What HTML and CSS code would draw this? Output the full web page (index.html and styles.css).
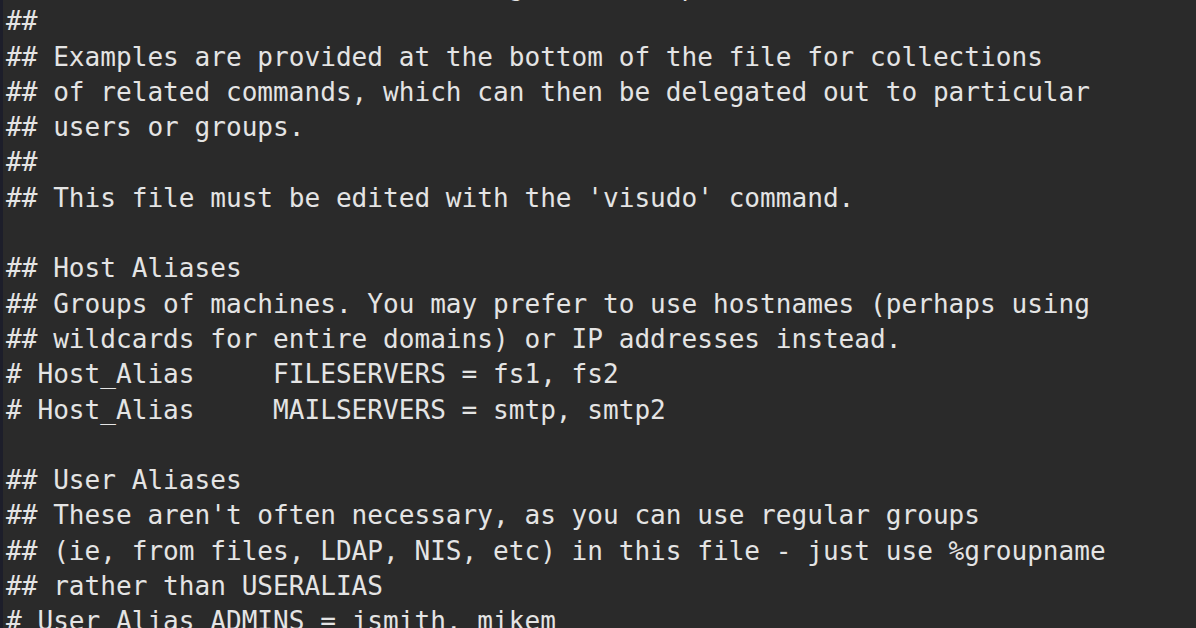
FILE: index.html
```html
<!DOCTYPE html>
<html>
<head>
<meta charset="utf-8">
<link rel="stylesheet" href="styles.css">
</head>
<body>
<main class="term">
<pre class="code">## the root user, without needing the root password.
##
## Examples are provided at the bottom of the file for collections
## of related commands, which can then be delegated out to particular
## users or groups.
##
## This file must be edited with the 'visudo' command.

## Host Aliases
## Groups of machines. You may prefer to use hostnames (perhaps using
## wildcards for entire domains) or IP addresses instead.
# Host_Alias     FILESERVERS = fs1, fs2
# Host_Alias     MAILSERVERS = smtp, smtp2

## User Aliases
## These aren't often necessary, as you can use regular groups
## (ie, from files, LDAP, NIS, etc) in this file - just use %groupname
## rather than USERALIAS
# User_Alias ADMINS = jsmith, mikem
</pre>
</main>
</body>
</html>
```

FILE: styles.css
```css
html, body {
  margin: 0;
  padding: 0;
  background: #2a2a2a;
  overflow: hidden;
}
.term {
  width: 1196px;
  height: 628px;
  overflow: hidden;
  background: #2a2a2a;
  border-left: 3px solid #1d1e2a;
  box-sizing: border-box;
}
.code {
  margin: -31px 0 0 0;
  padding-left: 3px;
  font-family: "DejaVu Sans Mono", monospace;
  font-size: 26.1px;
  line-height: 35.3px;
  color: #e4e4e4;
  white-space: pre;
}
```
